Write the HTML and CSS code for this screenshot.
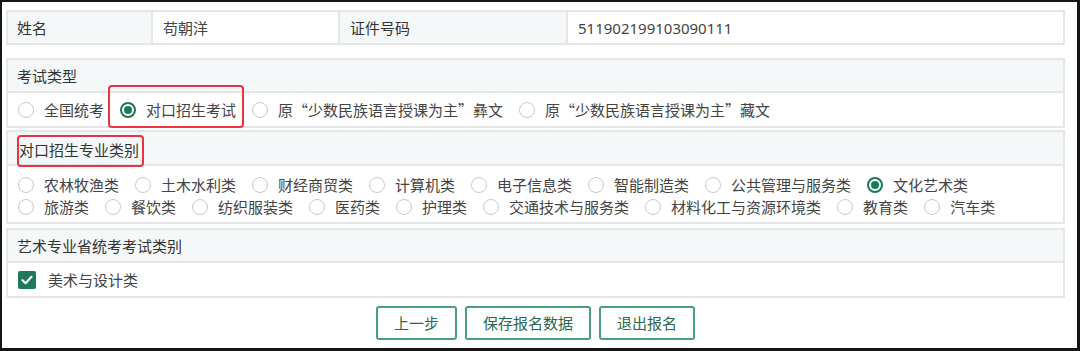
FILE: index.html
```html
<!DOCTYPE html>
<html lang="zh-CN">
<head>
<meta charset="utf-8">
<title>报名信息</title>
<link rel="stylesheet" href="styles.css">
</head>
<body>
<div class="frame">
  <div class="info-table">
    <div class="cell label">姓名</div>
    <div class="cell value">苟朝洋</div>
    <div class="cell label">证件号码</div>
    <div class="cell value num">511902199103090111</div>
  </div>

  <section class="panel p-exam">
    <div class="panel-head">考试类型</div>
    <div class="panel-body">
      <div class="options">
        <label class="opt"><span class="radio"></span>全国统考</label>
        <label class="opt marked m1"><span class="radio on"></span>对口招生考试</label>
        <label class="opt"><span class="radio"></span>原“少数民族语言授课为主”彝文</label>
        <label class="opt"><span class="radio"></span>原“少数民族语言授课为主”藏文</label>
      </div>
    </div>
  </section>

  <section class="panel p-major">
    <div class="panel-head"><span class="marked m2">对口招生专业类别</span></div>
    <div class="panel-body">
      <div class="options wrap">
        <label class="opt"><span class="radio"></span>农林牧渔类</label>
        <label class="opt"><span class="radio"></span>土木水利类</label>
        <label class="opt"><span class="radio"></span>财经商贸类</label>
        <label class="opt"><span class="radio"></span>计算机类</label>
        <label class="opt"><span class="radio"></span>电子信息类</label>
        <label class="opt"><span class="radio"></span>智能制造类</label>
        <label class="opt"><span class="radio"></span>公共管理与服务类</label>
        <label class="opt"><span class="radio on"></span>文化艺术类</label>
        <label class="opt"><span class="radio"></span>旅游类</label>
        <label class="opt"><span class="radio"></span>餐饮类</label>
        <label class="opt"><span class="radio"></span>纺织服装类</label>
        <label class="opt"><span class="radio"></span>医药类</label>
        <label class="opt"><span class="radio"></span>护理类</label>
        <label class="opt"><span class="radio"></span>交通技术与服务类</label>
        <label class="opt"><span class="radio"></span>材料化工与资源环境类</label>
        <label class="opt"><span class="radio"></span>教育类</label>
        <label class="opt"><span class="radio"></span>汽车类</label>
      </div>
    </div>
  </section>

  <section class="panel p-art">
    <div class="panel-head">艺术专业省统考考试类别</div>
    <div class="panel-body">
      <label class="opt chk-opt"><span class="checkbox"><svg viewBox="0 0 18 18" width="18" height="18"><path d="M4.5 9.2 L7.6 12.2 L13.5 5.8" fill="none" stroke="#fff" stroke-width="2.2" stroke-linecap="round" stroke-linejoin="round"/></svg></span>美术与设计类</label>
    </div>
  </section>

  <div class="actions">
    <button class="btn">上一步</button>
    <button class="btn">保存报名数据</button>
    <button class="btn">退出报名</button>
  </div>
</div>
</body>
</html>
```

FILE: styles.css
```css
* { box-sizing: border-box; }
html, body { margin: 0; padding: 0; background: #fff; }
body {
  font-family: "Noto Sans CJK SC", "Noto Sans", "Liberation Sans", sans-serif;
  font-size: 15px;
  color: #333;
}
.frame {
  width: 1080px;
  height: 351px;
  border: 2px solid #151515;
  border-right-width: 3px;
  border-bottom-width: 3px;
  padding: 8px 12px 0 4px;
  display: flex;
  flex-direction: column;
}
.info-table {
  display: grid;
  grid-template-columns: 143px 187px 228px 1fr;
  height: 35px;
  border: 2px solid #e6e6e6;
}
.cell {
  display: flex;
  align-items: center;
  padding-left: 10px;
  border-left: 2px solid #e6e6e6;
  line-height: 20px;
}
.cell:first-child { border-left: none; padding-left: 9px; }
.cell.label { background: #f5f8f9; color: #333; }
.cell.value { background: #fff; color: #444; }
.cell.num { font-family: "Noto Sans", "Liberation Sans", sans-serif; font-size: 15px; color: #444; }

.panel {
  border: 2px solid #e6e6e6;
}
.p-exam { margin-top: 13px; }
.p-major { margin-top: 2px; }
.p-art { margin-top: 4px; }
.panel-head {
  background: #f5f8f9;
  border-bottom: 2px solid #e6e6e6;
  display: flex;
  align-items: center;
  padding-left: 9px;
  line-height: 20px;
  color: #333;
}
.p-exam .panel-head { height: 33px; }
.p-exam .panel-body { height: 33px; }
.p-major .panel-head { height: 34px; padding-top: 4px; }
.p-major .panel-body { height: 56px; padding-top: 8px; }
.p-art .panel-head { height: 33px; }
.p-art .panel-body { height: 33px; }
.panel-body {
  display: flex;
  align-items: center;
  padding-left: 10px;
}
.p-major .panel-body { align-items: flex-start; }
.options {
  display: flex;
  align-items: center;
  column-gap: 16px;
}
.options.wrap {
  flex-wrap: wrap;
  max-width: 990px;
  row-gap: 0;
}
.opt {
  display: flex;
  align-items: center;
  height: 22px;
  line-height: 22px;
  color: #444;
  white-space: nowrap;
}
.radio {
  width: 16px;
  height: 16px;
  border-radius: 50%;
  border: 1px solid #c9c9c9;
  background: #fff;
  margin-right: 10px;
  flex: none;
  position: relative;
}
.radio.on {
  border: 2px solid #1b7a57;
}
.radio.on::after {
  content: "";
  position: absolute;
  left: 2px;
  top: 2px;
  width: 8px;
  height: 8px;
  border-radius: 50%;
  background: #1b7a57;
}
.checkbox {
  width: 18px;
  height: 18px;
  border-radius: 2px;
  background: #1f7a5a;
  margin-right: 12px;
  display: flex;
  flex: none;
}

.marked { position: relative; }
.marked::after {
  content: "";
  position: absolute;
  border: 2px solid #ec3140;
  border-radius: 4px;
  pointer-events: none;
}
.m1::after { left: -12px; right: -8px; top: -14px; bottom: -7px; }
.m2 { display: inline-block; margin-left: 2px; line-height: 20px; }
.m2::after { left: -2px; right: -5px; top: -5px; bottom: -7px; }

.actions {
  display: flex;
  justify-content: center;
  gap: 8px;
  margin-top: 8px;
}
.btn {
  font-family: inherit;
  font-size: 15px;
  height: 34px;
  padding: 0 16px;
  background: #fff;
  border: 2px solid #4a9d85;
  border-radius: 3px;
  color: #2a6650;
  line-height: 20px;
}
```
